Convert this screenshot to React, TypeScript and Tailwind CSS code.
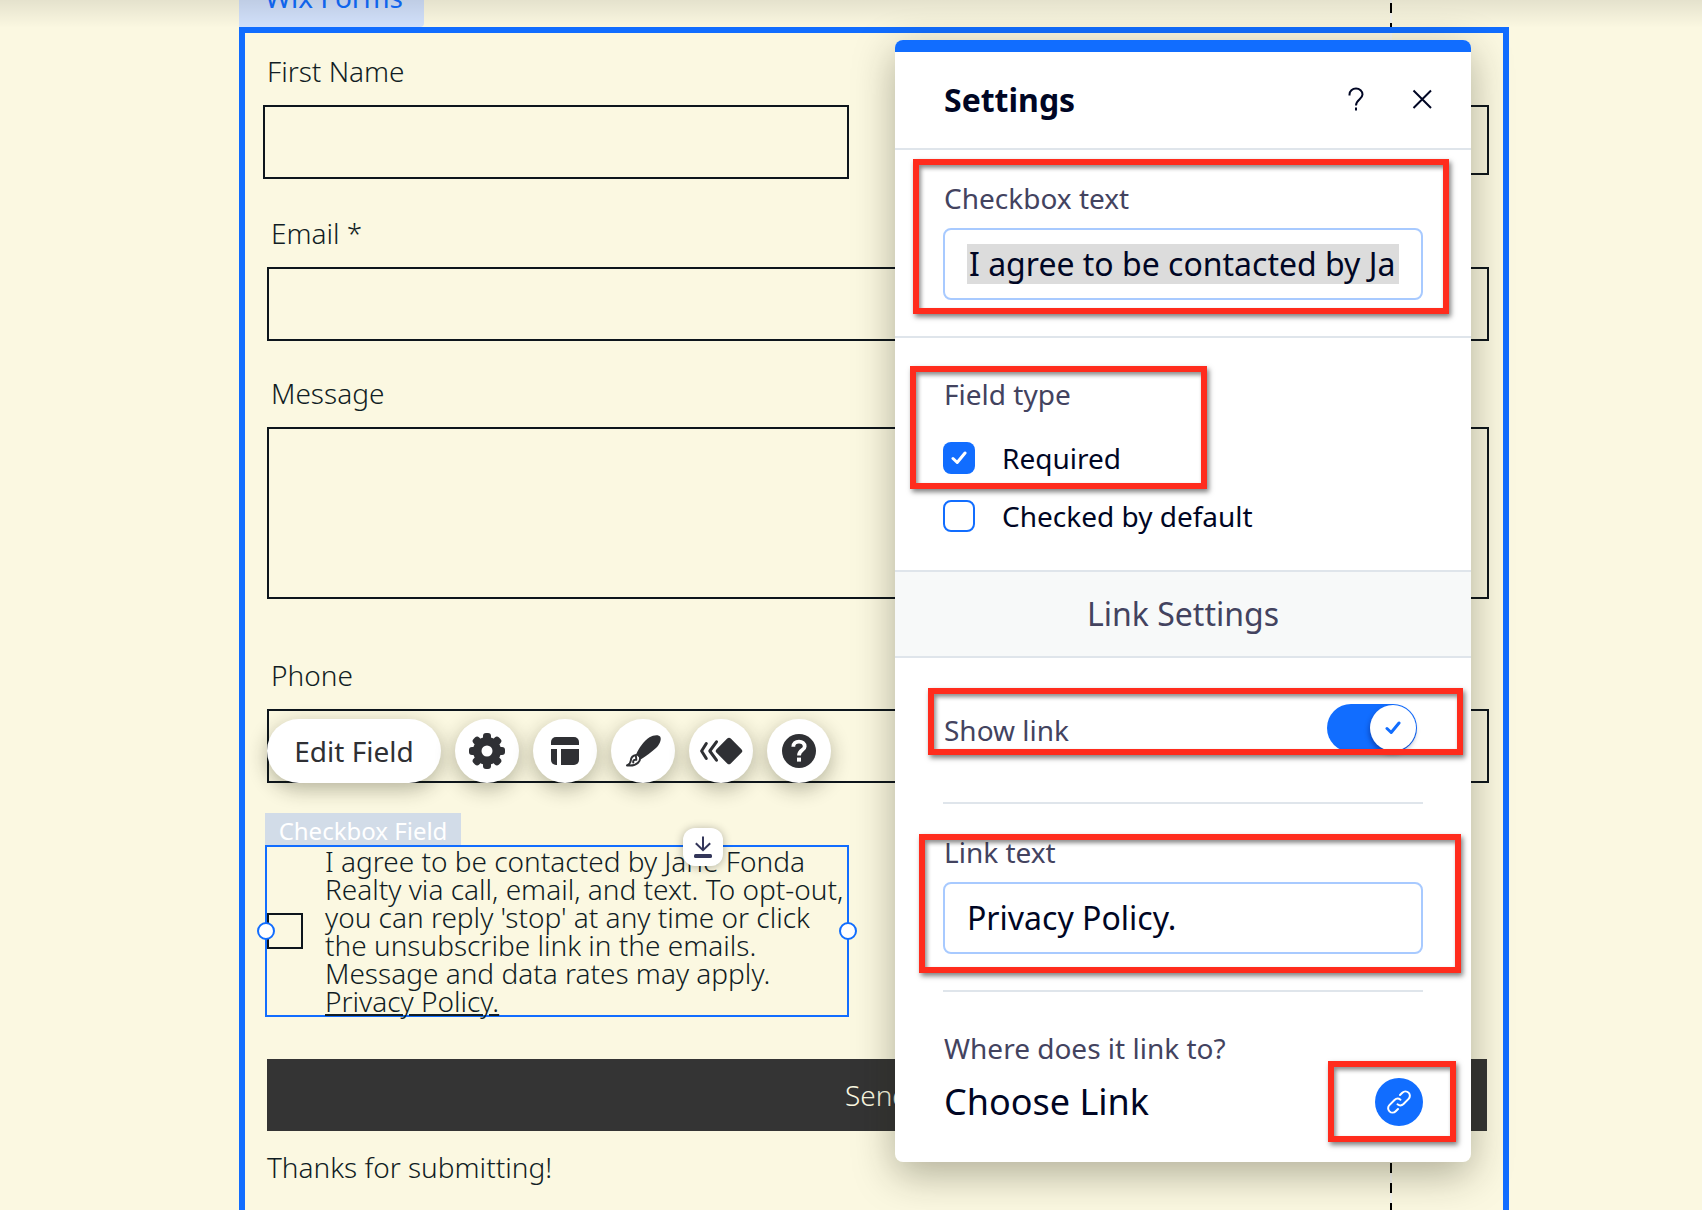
import type { ReactNode } from "react";

const FIELD = "block w-full border-2 border-[#0d151c] bg-transparent px-4 text-[28px] font-light outline-none";
const LABEL = "block pl-1 text-[28px] leading-8 font-light text-[#111d24]";
const PANEL_LABEL = "block pl-px text-[28px] leading-8 text-[#43435f]";
const MARK =
  "pointer-events-none absolute border-[6px] border-[#ff2c1d] shadow-[2px_3px_5px_rgba(0,0,0,0.5),inset_2px_3px_4px_rgba(0,0,0,0.45)]";

function RoundButton({ label, children }: { label: string; children: ReactNode }) {
  return (
    <button
      type="button"
      aria-label={label}
      className="size-16 shrink-0 rounded-full bg-white text-[#2f3034] shadow-[0_6px_20px_rgba(30,30,10,0.32)]"
    >
      <svg viewBox="0 0 64 64" className="size-16" fill="currentColor" aria-hidden="true">
        {children}
      </svg>
    </button>
  );
}

function Toolbar() {
  return (
    <div className="absolute top-[10px] left-0 z-10 flex gap-[14px]">
      <button
        type="button"
        className="h-16 w-[174px] rounded-full bg-white text-[28px] text-[#2f3034] shadow-[0_6px_20px_rgba(30,30,10,0.32)]"
      >
        Edit Field
      </button>
      <RoundButton label="Settings">
        <circle cx="32" cy="32" r="14" />
        <rect x="28" y="14" width="8" height="36" rx="3" />
        <rect x="28" y="14" width="8" height="36" rx="3" transform="rotate(45 32 32)" />
        <rect x="28" y="14" width="8" height="36" rx="3" transform="rotate(90 32 32)" />
        <rect x="28" y="14" width="8" height="36" rx="3" transform="rotate(135 32 32)" />
        <circle cx="32" cy="32" r="5.5" fill="#fff" />
      </RoundButton>
      <RoundButton label="Layout">
        <path d="M18 26v-3a5 5 0 0 1 5-5h18a5 5 0 0 1 5 5v3z" />
        <path d="M18 30h6v16h-1a5 5 0 0 1-5-5z" />
        <path d="M28 30h18v11a5 5 0 0 1-5 5H28z" />
      </RoundButton>
      <RoundButton label="Design">
        <path d="M25 35.400C28 29 33 22 38.500 18.300C42.500 15.800 48 15.300 49.400 18C50.600 20.800 48.500 25.500 45 29C40.500 33.200 35 37 30 40.200Z" />
        <path
          d="M25.200 36C21.800 36.500 20 38.800 19.800 41.500C19.500 44 18 45.500 16 46.400C20 46.900 24.500 46.300 27 43.800C28.800 42 29.300 40.200 29 38.500M22.300 43.500C21.800 41.500 23.200 40.500 25.300 40.800L25 37.500"
          fill="none"
          stroke="currentColor"
          strokeWidth="2"
          strokeLinejoin="round"
          strokeLinecap="round"
        />
      </RoundButton>
      <RoundButton label="Animation">
        <path d="M41.800 19.600L52.400 30.200a2.500 2.500 0 0 1 0 3.600L41.800 44.400a2.500 2.500 0 0 1-3.600 0L27.600 33.800a2.500 2.500 0 0 1 0-3.600L38.200 19.600a2.500 2.500 0 0 1 3.600 0z" />
        <path
          d="M17.300 24.500L12.600 32l4.700 7.500M27.500 22.800L20.800 32l6.700 9.200"
          fill="none"
          stroke="currentColor"
          strokeWidth="3"
          strokeLinecap="round"
          strokeLinejoin="round"
        />
      </RoundButton>
      <RoundButton label="Help">
        <circle cx="32" cy="32" r="17" />
        <path
          d="M26.300 27.800C26.300 24.500 28.600 22.600 32 22.600S37.700 24.500 37.700 27.400C37.700 31.200 32 31.200 32 36.400"
          fill="none"
          stroke="#fff"
          strokeWidth="3.800"
        />
        <rect x="30" y="38.600" width="4" height="4" fill="#fff" />
      </RoundButton>
    </div>
  );
}

function SelectedCheckboxField() {
  return (
    <div className="mt-[30px] -ml-[2px] grid grid-cols-2 gap-14">
      <div>
        <div className="flex h-8 w-[196px] items-end justify-center bg-[#d2dce8] text-2xl leading-7 text-white">
          Checkbox Field
        </div>
        <div className="relative flex items-center gap-[22px] border-2 border-[#116dff]">
          <input
            id="agree"
            type="checkbox"
            className="size-9 shrink-0 appearance-none border-2 border-[#0d151c] bg-transparent"
          />
          <label htmlFor="agree" className="text-[28px] leading-7 font-light whitespace-nowrap text-[#111d24]">
            I agree to be contacted by Jane Fonda
            <br />
            Realty via call, email, and text. To opt-out,
            <br />
            you can reply 'stop' at any time or click
            <br />
            the unsubscribe link in the emails.
            <br />
            Message and data rates may apply.
            <br />
            <a href="#privacy" className="underline decoration-2 underline-offset-2">
              Privacy Policy.
            </a>
          </label>
          <span className="absolute top-1/2 -left-[10px] size-[18px] -translate-y-1/2 rounded-full border-2 border-[#116dff] bg-white" />
          <span className="absolute top-1/2 -right-[10px] size-[18px] -translate-y-1/2 rounded-full border-2 border-[#116dff] bg-white" />
          <button
            type="button"
            aria-label="Push down"
            className="absolute -top-[19px] right-[124px] h-[38px] w-10 rounded-xl bg-white text-[#33365a] shadow-[0_1px_10px_rgba(0,0,0,0.3)]"
          >
            <svg viewBox="0 0 40 38" className="h-[38px] w-10" fill="none" stroke="currentColor" strokeWidth="2" aria-hidden="true">
              <path d="M20 8.500V22M12.800 15.300L20 22.200l7.200-6.900" />
              <rect x="11" y="26" width="18" height="4" rx="1.500" fill="currentColor" stroke="none" />
            </svg>
          </button>
        </div>
      </div>
    </div>
  );
}

function CheckMark({ className }: { className: string }) {
  return (
    <svg viewBox="0 0 16 14" className={className} fill="none" stroke="currentColor" strokeWidth="3" strokeLinecap="round" strokeLinejoin="round" aria-hidden="true">
      <path d="M2 7.500l4.200 4L14 2" />
    </svg>
  );
}

function SettingsPanel() {
  return (
    <section
      aria-label="Settings"
      className="absolute top-10 right-[231px] z-20 w-[576px] rounded-lg bg-white text-[#000624] shadow-[0_12px_40px_rgba(30,30,10,0.34)]"
    >
      <div className="h-3 rounded-t-lg bg-[#116dff]" />
      <header className="flex h-[98px] items-center border-b-2 border-[#dfe5eb] pr-9 pl-12">
        <h2 className="flex-1 pl-px text-[32px] font-bold">Settings</h2>
        <button type="button" aria-label="Help" className="mr-10">
          <svg viewBox="0 0 26 26" className="size-[26px]" fill="none" stroke="currentColor" strokeWidth="2" aria-hidden="true">
            <path d="M6.500 8.500V7.500A6.500 6 0 0 1 19.500 7.500C19.500 12 13 12.500 13 18.500M13 20.500V23.500" />
          </svg>
        </button>
        <button type="button" aria-label="Close">
          <svg viewBox="0 0 26 26" className="size-[26px]" fill="none" stroke="currentColor" strokeWidth="2" aria-hidden="true">
            <path d="M4.500 3.500l17.500 17.500M22 3.500L4.500 21" />
          </svg>
        </button>
      </header>

      <div className="relative border-b-2 border-[#dfe5eb] px-12 pt-8 pb-9">
        <label htmlFor="checkbox-text" className={PANEL_LABEL}>
          Checkbox text
        </label>
        <div className="mt-[14px] flex h-[72px] items-center rounded-lg border-2 border-[#a8caff] px-[22px]">
          <input
            id="checkbox-text"
            defaultValue="I agree to be contacted by Ja"
            className="h-10 w-full bg-[#dcdcdc] pl-[2px] text-[32px] outline-none"
          />
        </div>
        <div className={`${MARK} top-[9px] right-[22px] bottom-[22px] left-[18px]`} />
      </div>

      <div role="group" aria-labelledby="field-type" className="relative border-b-2 border-[#dfe5eb] px-12 pt-10 pb-[38px]">
        <p id="field-type" className={PANEL_LABEL}>
          Field type
        </p>
        <div className="mt-8 flex items-center gap-[27px]">
          <span className="relative size-8">
            <input id="required" type="checkbox" defaultChecked className="block size-8 appearance-none rounded-lg bg-[#116dff]" />
            <CheckMark className="pointer-events-none absolute inset-0 m-auto h-[14px] w-4 text-white" />
          </span>
          <label htmlFor="required" className="text-[28px] leading-8">
            Required
          </label>
        </div>
        <div className="mt-[26px] flex items-center gap-[27px]">
          <input id="default-checked" type="checkbox" className="size-8 appearance-none rounded-lg border-2 border-[#116dff] bg-white" />
          <label htmlFor="default-checked" className="text-[28px] leading-8">
            Checked by default
          </label>
        </div>
        <div className={`${MARK} top-7 bottom-[81px] left-[15px] w-[297px]`} />
      </div>

      <h3 className="flex h-[86px] items-center justify-center border-b-2 border-[#dfe5eb] bg-[#f7f9f9] text-[32px] text-[#43435f]">
        Link Settings
      </h3>

      <div className="relative px-12 pt-[46px]">
        <div className="flex h-12 items-end justify-between pr-[6px]">
          <label htmlFor="show-link" className={`${PANEL_LABEL} pb-[6px]`}>
            Show link
          </label>
          <span className="relative h-12 w-[90px]">
            <input id="show-link" type="checkbox" role="switch" defaultChecked className="block h-12 w-[90px] appearance-none rounded-full bg-[#116dff]" />
            <span className="pointer-events-none absolute top-px right-px flex size-[46px] items-center justify-center rounded-full bg-white text-[#116dff] shadow-[-1px_3px_5px_rgba(0,0,60,0.35)]">
              <CheckMark className="h-[14px] w-4" />
            </span>
          </span>
        </div>
        <div className="mt-[50px] h-[2px] bg-[#dfe5eb]" />
        <div className={`${MARK} top-[30px] right-2 bottom-[49px] left-[33px]`} />
      </div>

      <div className="relative px-12 pt-8">
        <label htmlFor="link-text" className={PANEL_LABEL}>
          Link text
        </label>
        <div className="mt-[14px] flex h-[72px] items-center rounded-lg border-2 border-[#a8caff] px-[22px]">
          <input id="link-text" defaultValue="Privacy Policy." className="h-10 w-full bg-transparent text-[32px] outline-none" />
        </div>
        <div className="mt-9 h-[2px] bg-[#dfe5eb]" />
        <div className={`${MARK} top-[30px] right-[10px] bottom-[19px] left-6`} />
      </div>

      <div className="relative px-12 pt-10 pb-9">
        <p className={PANEL_LABEL}>Where does it link to?</p>
        <div className="mt-[14px] flex h-12 items-center justify-between">
          <p className="pl-px text-4xl">Choose Link</p>
          <button type="button" aria-label="Choose link" className="flex size-12 items-center justify-center rounded-full bg-[#116dff] text-white">
            <svg viewBox="0 0 24 24" className="size-6" fill="none" stroke="currentColor" strokeWidth="2" strokeLinecap="round" aria-hidden="true">
              <path d="M10.500 14.300A4.600 4.600 0 0 0 16.500 14L21.600 8.900A4.300 4.300 0 0 0 15.300 2.700L13 5" />
              <path d="M13.500 9.700A4.600 4.600 0 0 0 7.500 10L2.400 15.100A4.300 4.300 0 0 0 8.700 21.300L11 19" />
            </svg>
          </button>
        </div>
        <div className={`${MARK} top-[69px] right-[15px] bottom-5 w-[128px]`} />
      </div>
    </section>
  );
}

export default function App() {
  return (
    <div className="relative flex min-h-screen flex-col overflow-hidden bg-[#fbf8e1] font-['Noto_Sans',sans-serif]">
      <div className="absolute inset-y-0 right-[310px] w-[2px] bg-[repeating-linear-gradient(to_bottom,#f7f7f2_0px,#f7f7f2_3px,#000_3px,#000_13px,#f7f7f2_13px,#f7f7f2_20px)]" />

      <div className="mr-[193px] ml-[239px] flex flex-1 flex-col">
        <div className="flex h-[27px] w-[185px] items-end overflow-hidden rounded-br bg-[#d2e1fb] pb-4 pl-[26px] text-[28px] leading-7 text-[#116dff]">
          Wix Forms
        </div>

        <form className="relative flex-1 border-[6px] border-b-0 border-[#116dff] pt-[22px] pr-[14px] pb-7 pl-[22px]">
          <div className="-ml-1 grid grid-cols-2 gap-[54px]">
            <div>
              <label htmlFor="first-name" className={LABEL}>
                First Name
              </label>
              <input id="first-name" className={`${FIELD} mt-[18px] h-[74px]`} />
            </div>
            <div className="pt-[50px]">
              <input aria-label="Last name" className={`${FIELD} h-[70px]`} />
            </div>
          </div>

          <label htmlFor="email" className={`${LABEL} mt-[38px]`}>
            Email *
          </label>
          <input id="email" className={`${FIELD} mt-[18px] h-[74px]`} />

          <label htmlFor="message" className={`${LABEL} mt-9`}>
            Message
          </label>
          <textarea id="message" className={`${FIELD} mt-[18px] h-[172px] resize-none`} />

          <label htmlFor="phone" className={`${LABEL} mt-[60px]`}>
            Phone
          </label>
          <div className="relative mt-[18px]">
            <input id="phone" className={`${FIELD} h-[74px]`} />
            <Toolbar />
          </div>

          <SelectedCheckboxField />

          <div className="mt-[42px] pr-[2px]">
            <button type="button" className="block h-[72px] w-full bg-[#343434] text-[28px] font-light text-[#fbf8e1]">
              Send
            </button>
          </div>
          <p className="mt-5 text-[28px] leading-8 font-light text-[#111d24]">Thanks for submitting!</p>
        </form>
      </div>

      <div className="pointer-events-none absolute inset-x-0 top-0 h-7 bg-gradient-to-b from-black/9 to-transparent" />
      <SettingsPanel />
    </div>
  );
}
